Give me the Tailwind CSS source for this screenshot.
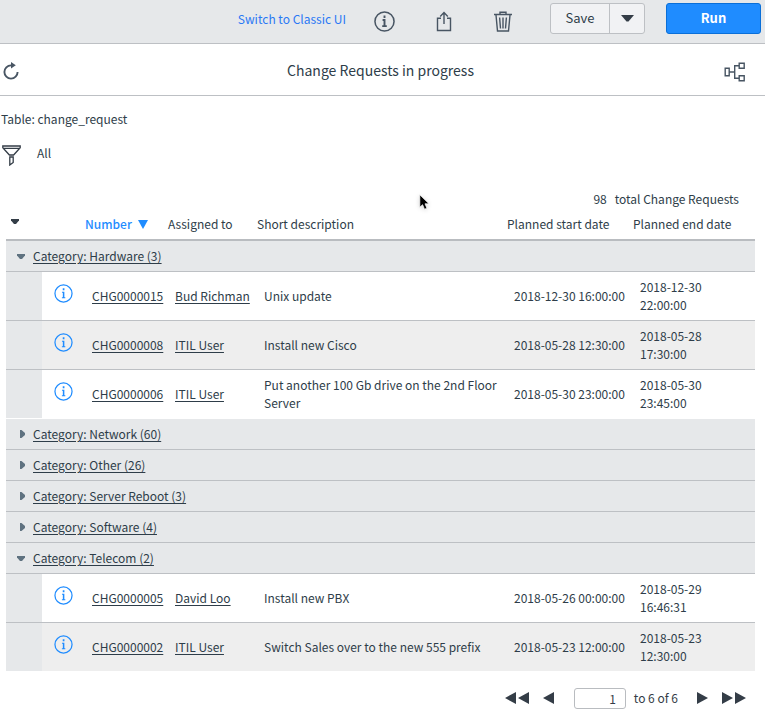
<!DOCTYPE html>
<html lang="en">
<head>
    <meta charset="UTF-8">
    <meta name="viewport" content="width=device-width, initial-scale=1.0">
    <title>Change Requests in progress</title>
    <script src="https://cdn.jsdelivr.net/npm/@tailwindcss/browser@4"></script>
</head>
<body class="bg-white font-['Noto_Sans_CJK_SC','Noto_Sans',sans-serif] text-[12px] leading-[18px] text-[#2e3d49]">
    <!-- Shared icon shapes -->
    <svg class="hidden">
        <symbol id="info" viewBox="0 0 20 20">
            <circle cx="10" cy="10" r="9" fill="none" stroke="currentColor" stroke-width="1.3"/>
            <path d="M9.2 4.6h1.8v1.9H9.2zM8.4 8.2h2.5V14h1v1H8.3v-1h1V9.1h-.9z" fill="currentColor"/>
        </symbol>
    </svg>

    <header class="flex h-11 items-start justify-end border-b border-[#bdc0c4] bg-[#e6e8ea] pt-[3px] pr-1">
        <a href="#" class="mt-[7px] mr-[28px] text-[#2a78f5]">Switch to Classic UI</a>
        <button class="mt-[8px] mr-[41px] text-[#485563]" aria-label="Info">
            <svg class="size-[21px]" viewBox="0 0 22 22" fill="none" stroke="currentColor" stroke-width="1.6">
                <circle cx="11" cy="11" r="10"/>
                <path d="M11 4.8v2.6M9 9.4h2v6M8.6 15.8h4.8" stroke-width="2"/>
            </svg>
        </button>
        <button class="mt-[8px] mr-[42px] text-[#485563]" aria-label="Share">
            <svg class="h-[21px] w-4" viewBox="0 0 16 21" fill="none" stroke="currentColor" stroke-width="1.4">
                <path d="M5 7.2H1.5v12.3h13V7.2H11M8 13V2M4.2 5.4 8 1.6l3.8 3.8"/>
            </svg>
        </button>
        <button class="mt-[8px] mr-[38px] text-[#485563]" aria-label="Delete">
            <svg class="h-[21px] w-[18px]" viewBox="0 0 18 21" fill="none" stroke="currentColor" stroke-width="1.4">
                <path d="M0 3.5h18M6 3.3V1.2h6v2.1M2 4l1.5 16h11L16 4M5.6 6.5l.9 11M9 6.5v11M12.4 6.5l-.9 11"/>
            </svg>
        </button>
        <div class="mr-[21px] flex h-[31px] w-[95px] rounded-[3px] border border-[#bdc0c4] bg-[#f1f2f4]">
            <button class="w-[59px] border-r border-[#bdc0c4] pb-px text-[13px]">Save</button>
            <button class="flex flex-1 items-center justify-center" aria-label="More save options">
                <svg class="h-[7px] w-[13px]" viewBox="0 0 13 7" fill="#343d47"><path d="M0 0h13L7.5 6.5h-2z"/></svg>
            </button>
        </div>
        <button class="h-[31px] w-[95px] rounded-[3px] border border-[#0a6fd8] bg-[#1f8cff] pb-px text-[13px] font-bold text-white">Run</button>
    </header>

    <div class="grid h-[52px] grid-cols-[1fr_auto_1fr] items-center border-b border-[#bdc0c4] pr-[19px] pl-[15px]">
        <button class="-ml-3 justify-self-start pt-[2px] text-[#485563]" aria-label="Refresh">
            <svg class="h-[18px] w-4" viewBox="0 0 16 18" fill="none" stroke="currentColor" stroke-width="1.9">
                <path d="M9.5 3.4H8A6.6 6.6 0 1 0 14.6 10"/>
                <path d="M8 0v6.4l4.8-3.2z" fill="currentColor" stroke="none"/>
            </svg>
        </button>
        <h1 class="text-[14px] leading-5">Change Requests in progress</h1>
        <button class="justify-self-end pt-1 text-[#485563]" aria-label="Show relations">
            <svg class="h-5 w-[22px]" viewBox="0 0 22 20" fill="none" stroke="currentColor" stroke-width="1.4">
                <path d="M1.2 6.2h4v7.6h-4zM15.2 1.2h5v5h-5zM15.2 13.8h5v5h-5zM5.2 10h5.3M15.2 3.7h-4.5v12.6h4.5"/>
            </svg>
        </button>
    </div>

    <main class="pt-[14px]">
        <p class="pl-px">Table: change_request</p>
        <div class="flex h-[38px] items-end gap-4 pl-[2px]">
            <button class="text-[#343d47]" aria-label="Filter">
                <svg class="h-[21px] w-[19px]" viewBox="0 0 19 21" fill="none" stroke="currentColor" stroke-width="1.3">
                    <path d="M.8 1h17.4v1.8L11.6 10H7.4L.8 2.8zM1 3.4h17M7.8 12h3.4v5.5L7.8 20z"/>
                </svg>
            </button>
            <a href="#" class="pb-1">All</a>
        </div>

        <div class="mt-6 mr-[26px] flex justify-end gap-2"><span>98</span><span>total Change Requests</span></div>

        <div class="mr-[10px] ml-[6px]">
            <table class="w-full table-fixed border-separate border-spacing-0 text-left">
                <colgroup>
                    <col class="w-9">
                    <col class="w-[43px]">
                    <col class="w-[83px]">
                    <col class="w-[89px]">
                    <col>
                    <col class="w-[126px]">
                    <col class="w-[122px]">
                </colgroup>
                <thead>
                    <tr class="h-[33px] *:border-b-2 *:border-[#b9bcc0] *:p-0 *:font-normal">
                        <th>
                            <button class="block pb-1 pl-[5px]" aria-label="Collapse all groups">
                                <svg class="h-[5px] w-2" viewBox="0 0 8 5" fill="#343d47"><path d="M0 0h8v1.5L5 5H3L0 1.5z"/></svg>
                            </button>
                        </th>
                        <th></th>
                        <th>
                            <button class="flex items-center gap-[6px] font-medium text-[#1f8cff]">Number
                                <svg class="mt-[2px] h-[9px] w-[10px]" viewBox="0 0 10 9" fill="currentColor"><path d="M0 0h10L5 9z"/></svg>
                            </button>
                        </th>
                        <th>Assigned to</th>
                        <th>Short description</th>
                        <th>Planned start date</th>
                        <th>Planned end date</th>
                    </tr>
                </thead>
                <tbody id="rows"></tbody>
            </table>

            <nav class="flex h-[52px] items-center justify-end pr-[9px] text-[#343d47]" aria-label="Pagination">
                <button class="mr-[14px]" aria-label="First page">
                    <svg class="h-3 w-6" viewBox="0 0 24 12" fill="currentColor"><path d="M11 0v12L0 6zM24 0v12L13 6z"/></svg>
                </button>
                <button class="mr-5" aria-label="Previous page">
                    <svg class="h-3 w-[11px]" viewBox="0 0 11 12" fill="currentColor"><path d="M11 0v12L0 6z"/></svg>
                </button>
                <input type="text" value="1" aria-label="Page" class="mr-2 h-[21px] w-[52px] rounded-[3px] border border-[#b9bcc0] bg-white pr-[9px] text-right">
                <span class="mr-[19px]">to 6 of 6</span>
                <button class="mr-[14px]" aria-label="Next page">
                    <svg class="h-3 w-[11px]" viewBox="0 0 11 12" fill="currentColor"><path d="M0 0v12l11-6z"/></svg>
                </button>
                <button aria-label="Last page">
                    <svg class="h-3 w-6" viewBox="0 0 24 12" fill="currentColor"><path d="M0 0v12l11-6zM13 0v12l11-6z"/></svg>
                </button>
            </nav>
        </div>
    </main>

    <!-- Mouse pointer -->
    <svg class="absolute top-[194px] left-[419px] h-[17px] w-[11px] drop-shadow-sm" viewBox="0 0 11 17">
        <path d="M.8.8v12.4l2.8-2.5 1.9 4.5 2.4-1-1.9-4.4h4z" fill="#000" stroke="#fff" stroke-width=".7"/>
    </svg>

    <script>
        var groups = [
            { name: 'Hardware (3)', rows: [
                ['CHG0000015', 'Bud Richman', 'Unix update', '2018-12-30 16:00:00', '2018-12-30 22:00:00'],
                ['CHG0000008', 'ITIL User', 'Install new Cisco', '2018-05-28 12:30:00', '2018-05-28 17:30:00'],
                ['CHG0000006', 'ITIL User', 'Put another 100 Gb drive on the 2nd Floor Server', '2018-05-30 23:00:00', '2018-05-30 23:45:00']
            ] },
            { name: 'Network (60)', rows: [] },
            { name: 'Other (26)', rows: [] },
            { name: 'Server Reboot (3)', rows: [] },
            { name: 'Software (4)', rows: [] },
            { name: 'Telecom (2)', rows: [
                ['CHG0000005', 'David Loo', 'Install new PBX', '2018-05-26 00:00:00', '2018-05-29 16:46:31'],
                ['CHG0000002', 'ITIL User', 'Switch Sales over to the new 555 prefix', '2018-05-23 12:00:00', '2018-05-23 12:30:00']
            ] }
        ];

        var down = '<svg class="mr-2 ml-px h-[5px] w-2" viewBox="0 0 8 5" fill="#5f7280"><path d="M0 0h8v1.5L5 5H3L0 1.5z"/></svg>';
        var right = '<svg class="mr-2 ml-1 h-2 w-[5px]" viewBox="0 0 5 8" fill="#5f7280"><path d="M0 0h1.5L5 3v2L1.5 8H0z"/></svg>';
        var html = '';

        groups.forEach(function (group) {
            html += '<tr class="h-[31px]"><th colspan="7" class="border-b border-[#bdc0c4] bg-[#e6e8ea] p-0 font-normal">' +
                '<button class="flex items-center pl-[10px]">' + (group.rows.length ? down : right) +
                '<span class="underline underline-offset-2">Category: ' + group.name + '</span></button></th></tr>';

            group.rows.forEach(function (row, i) {
                var last = i === group.rows.length - 1;
                html += '<tr class="h-[49px] *:border-b *:py-0 ' + (last ? '*:border-white' : '*:border-[#bdc0c4]') + (i % 2 ? ' bg-[#eeeeee]' : '') + '">' +
                    '<td class="bg-[#e6e8ea]"></td>' +
                    '<td class="pl-3"><button class="mb-[5px] block text-[#1f8cff]" aria-label="Preview ' + row[0] + '"><svg class="size-[19px]"><use href="#info"/></svg></button></td>' +
                    '<td class="pl-[7px]"><a href="#" class="underline underline-offset-2">' + row[0] + '</a></td>' +
                    '<td class="pl-[7px]"><a href="#" class="underline underline-offset-2">' + row[1] + '</a></td>' +
                    '<td class="px-[7px]">' + row[2] + '</td>' +
                    '<td class="pl-[7px] whitespace-nowrap">' + row[3] + '</td>' +
                    '<td class="pr-10 pl-[7px]">' + row[4] + '</td></tr>';
            });
        });
        document.getElementById('rows').innerHTML = html;
    </script>
</body>
</html>
